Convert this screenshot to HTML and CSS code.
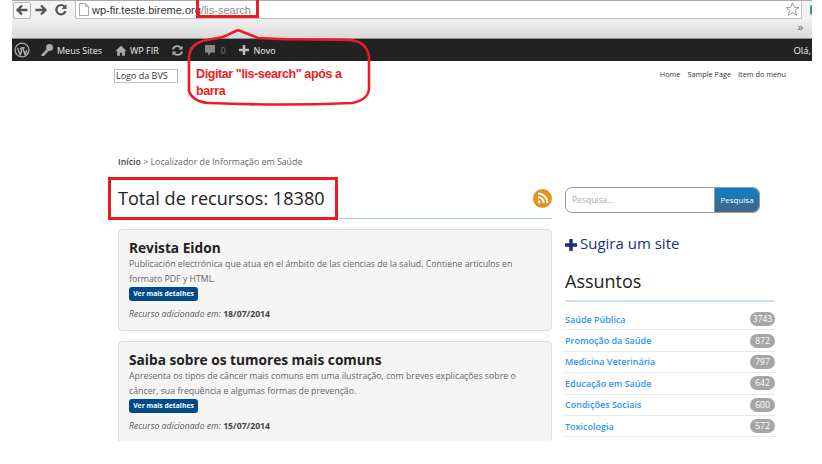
FILE: index.html
```html
<!DOCTYPE html>
<html lang="pt">
<head>
<meta charset="utf-8">
<title>Localizador de Informação em Saúde</title>
<link rel="stylesheet" href="styles.css">
</head>
<body>
<div class="window">
  <div class="chrome">
    <div class="toolbar">
      <span class="navbtn back"><svg width="14" height="14" viewBox="0 0 14 14"><path d="M12.500 7H3M7 2.500 2.500 7 7 11.500" fill="none" stroke="#555" stroke-width="2.400"/></svg></span>
      <span class="navbtn fwd"><svg width="14" height="14" viewBox="0 0 14 14"><path d="M1.500 7H11M7 2.500 11.500 7 7 11.500" fill="none" stroke="#555" stroke-width="2.400"/></svg></span>
      <span class="navbtn reload"><svg width="14" height="14" viewBox="0 0 14 14"><path d="M11.500 8.200A4.700 4.700 0 1 1 10.400 3.400" fill="none" stroke="#555" stroke-width="2.200"/><path d="M12.500 1v5h-5z" fill="#555"/></svg></span>
      <div class="omnibox">
        <svg class="pageicon" width="10" height="13" viewBox="0 0 10 13"><path d="M.5.5h6l3 3v9H.5zM6.500.5v3h3" fill="#fff" stroke="#aaa"/></svg>
        <span class="url">wp-fir.teste.bireme.org<span class="urlpath">/lis-search</span></span>
        <svg class="star" width="15" height="15" viewBox="0 0 15 15"><path d="M7.500 1l1.900 4.400h4.600l-3.600 3 1.300 4.800-4.200-2.600-4.200 2.600 1.300-4.800L1 5.400h4.600z" fill="#fff" stroke="#999"/></svg>
      </div>
      <span class="ext"></span>
    </div>
    <div class="bookmarks">»</div>
  </div>
  <div class="adminbar">
    <div class="admin-left">
      <svg class="wp" width="16" height="16" viewBox="0 0 18 18"><circle cx="9" cy="9" r="7.800" fill="none" stroke="#aaa" stroke-width="1.500"/><path d="M3.800 6.500 7 14.500l1.600-4.500-1.200-3.500M8 6.500h4M9.800 6.500l2.800 8 1.700-5.200" fill="none" stroke="#aaa" stroke-width="1.700"/></svg>
      <span class="item item-sites"><svg width="14" height="14" viewBox="0 0 14 14"><circle cx="9.500" cy="4.500" r="3.500" fill="#aaa"/><path d="M7 6 1.500 11.500V13h2.500l5-5.500z" fill="#aaa"/></svg>Meus Sites</span>
      <span class="item item-home"><svg width="12" height="13" viewBox="0 0 14 14"><path d="M7 1.500 .5 7.500h2V13h3.200V9.500h2.600V13h3.200V7.500h2z" fill="#aaa"/></svg>WP FIR</span>
      <span class="item item-sync"><svg width="13" height="13" viewBox="0 0 14 14"><path d="M2 6a5 5 0 0 1 9-1.500M12 8a5 5 0 0 1-9 1.500" fill="none" stroke="#aaa" stroke-width="2"/><path d="M12.500 1.500v4.500H8zM1.500 12.500V8H6z" fill="#aaa"/></svg><span class="faint">1</span></span>
      <span class="item item-comment"><svg width="10" height="12" viewBox="0 0 10 12"><path d="M0 1h10v7.500H6L3 11.500V8.500H0z" fill="#888"/></svg><span class="dim">0</span></span>
      <span class="item item-new"><svg width="10" height="10" viewBox="0 0 10 10"><path d="M3.700 0h2.600v3.700H10v2.600H6.300V10H3.700V6.300H0V3.700h3.700z" fill="#bbb"/></svg>Novo</span>
    </div>
    <span class="hello">Olá,</span>
  </div>
  <header class="sitehead">
    <span class="logo">Logo da BVS</span>
    <nav class="sitenav"><a>Home</a><a>Sample Page</a><a>Item do menu</a></nav>
  </header>
  <main class="layout">
    <section class="content">
      <p class="crumb"><b>Início</b> &gt; Localizador de Informação em Saúde</p>
      <div class="pagehead">
        <h1>Total de recursos: 18380</h1>
        <span class="rss"><svg width="12" height="12" viewBox="0 0 12 12"><circle cx="2.200" cy="9.800" r="1.600" fill="#fff"/><path d="M1 5.200A5.800 5.800 0 0 1 6.800 11M1 1.500A9.500 9.500 0 0 1 10.500 11" fill="none" stroke="#fff" stroke-width="2"/></svg></span>
      </div>
      <article class="card">
        <h2>Revista Eidon</h2>
        <p class="desc">Publicación electrónica que atua en el ámbito de las ciencias de la salud, Contiene artículos en formato PDF y HTML.</p>
        <a class="more">Ver mais detalhes</a>
        <p class="added"><i>Recurso adicionado em:</i> <b>18/07/2014</b></p>
      </article>
      <article class="card">
        <h2>Saiba sobre os tumores mais comuns</h2>
        <p class="desc">Apresenta os tipos de câncer mais comuns em uma ilustração, com breves explicações sobre o câncer, sua frequência e algumas formas de prevenção.</p>
        <a class="more">Ver mais detalhes</a>
        <p class="added"><i>Recurso adicionado em:</i> <b>15/07/2014</b></p>
      </article>
    </section>
    <aside class="side">
      <div class="search"><span class="field">Pesquisa...</span><span class="go">Pesquisa</span></div>
      <a class="suggest"><svg width="12" height="12" viewBox="0 0 12 12"><path d="M4.300 0h3.400v4.300H12v3.400H7.700V12H4.300V7.700H0V4.300h4.300z" fill="#1f2f7a"/></svg>Sugira um site</a>
      <h3>Assuntos</h3>
      <ul class="topics">
        <li><a>Saúde Pública</a><span class="count">3743</span></li>
        <li><a>Promoção da Saúde</a><span class="count">872</span></li>
        <li><a>Medicina Veterinária</a><span class="count">797</span></li>
        <li><a>Educação em Saúde</a><span class="count">642</span></li>
        <li><a>Condições Sociais</a><span class="count">600</span></li>
        <li><a>Toxicologia</a><span class="count">572</span></li>
      </ul>
    </aside>
  </main>
</div>
<div class="mark mark-url"></div>
<div class="mark mark-total"></div>
<svg class="callout" width="190" height="78" viewBox="0 0 190 78"><path d="M2 28Q3 14 20 11C28 9 32 9 36 8L51 1 71 9C100 11 130 10 162 11Q180 12 182 28V60Q181 71 165 74C120 76 70 76 22 74Q6 73 2 62z" fill="none" stroke="#ed1c24" stroke-width="2.600"/></svg>
<p class="callout-text">Digitar "lis-search" após a barra</p>
</body>
</html>
```
FILE: styles.css
```css
html, body { margin: 0; padding: 0; background: #fff; }
body { height: 464px; overflow: hidden; font-family: "Open Sans", sans-serif; position: relative; }
h1, h2, h3, p, ul { margin: 0; padding: 0; }
.window { width: 800px; margin-left: 12px; height: 464px; overflow: hidden; }

.chrome { height: 38px; background: linear-gradient(#f4f4f4, #f0f0f0 50%, #dadada); border-bottom: 1px solid #8f8f8f; position: relative; }
.toolbar { display: flex; align-items: center; height: 19px; border-top: 1px solid #aaa; box-sizing: border-box; }
.navbtn { width: 18px; height: 17px; display: flex; align-items: center; justify-content: center; box-sizing: border-box; }
.navbtn.back { border: 1px solid #b5b5b5; border-radius: 2px; background: #f8f8f8; margin-left: 1px; }
.navbtn.fwd { margin-left: 1px; }
.navbtn.reload { margin-left: 2px; }
.omnibox { flex: 1; height: 18px; margin-left: 5px; margin-right: 8px; background: #fff; border: 1px solid #bdbdbd; border-top: 0; box-sizing: border-box; border-radius: 0 0 2px 2px; display: flex; align-items: center; padding-left: 3px; }
.url { margin-left: 3px; font: 11px "Liberation Sans", sans-serif; color: #333; }
.urlpath { color: #888; }
.star { margin-left: auto; margin-right: 1px; }
.ext { width: 2px; height: 10px; background: #2a9d6a; border-radius: 2px 0 0 2px; }
.bookmarks { position: absolute; right: 9px; top: 20px; font: 10px/16px "Liberation Sans", sans-serif; color: #555; }

.adminbar { height: 22px; background: #222; display: flex; justify-content: space-between; align-items: center; color: #eee; font-size: 9px; }
.admin-left { display: flex; align-items: center; }
.wp { margin-left: 2px; margin-right: 10px; }
.item { display: flex; align-items: center; gap: 3px; margin-right: 12px; }
.item-sites { margin-right: 13px; }
.item-sync { gap: 4px; }
.item-comment { gap: 6px; margin-right: 13px; }
.item-new { gap: 5px; }
.faint { color: #444; font-size: 8.500px; }
.dim { color: #777; font-size: 8.500px; }
.hello { font-size: 9.500px; white-space: nowrap; padding-right: 1px; }

.sitehead { height: 91px; display: flex; justify-content: space-between; align-items: flex-start; padding: 8px 26px 0 102px; box-sizing: border-box; }
.logo { border: 1px solid #bbb; font-size: 9px; line-height: 12px; width: 64px; box-sizing: border-box; color: #333; padding-left: 1px; }
.sitenav { display: flex; gap: 7px; font-size: 7.300px; color: #333; line-height: 10px; }

.layout { display: flex; height: 289px; overflow: hidden; padding-left: 106px; }
.content { width: 434px; }
.crumb { font-size: 8.800px; line-height: 21px; color: #666; }
.crumb b { color: #444; font-weight: 600; }
.pagehead { height: 40px; padding-top: 3px; margin-top: 2px; margin-bottom: 10px; display: flex; justify-content: space-between; align-items: center; border-bottom: 1px solid #a9c6d6; }
h1 { font-size: 18.100px; font-weight: 400; color: #222; }
.rss { width: 19px; height: 19px; border-radius: 50%; background: #e8921e; display: flex; align-items: center; justify-content: center; }
.card { height: 102px; border: 1px solid #ddd; border-radius: 4px; background: #f5f5f5; padding: 9px 10px 0; box-sizing: border-box; margin-bottom: 10px; }
h2 { font-size: 13.700px; line-height: 18px; font-weight: 700; color: #222; }
.desc { font-size: 8.770px; line-height: 15px; color: #666; }
.more { display: block; width: 69px; height: 14px; border-radius: 3px; background: #034a8c; color: #fff; font-size: 6.800px; font-weight: 700; line-height: 14px; text-align: center; }
.added { font-size: 8.700px; line-height: 12px; margin-top: 7px; color: #555; }
.added b { font-weight: 700; color: #444; }

.side { width: 210px; margin-left: 13px; padding-top: 35px; }
.search { width: 195px; height: 26px; display: flex; border: 1px solid #999; border-radius: 7px; box-sizing: border-box; overflow: hidden; }
.field { flex: 1; font-size: 8.500px; line-height: 24px; color: #aaa; padding-left: 6px; border-right: 1px solid #999; }
.go { width: 44px; background: linear-gradient(#0a80cc, #466683); color: #fff; font-size: 8px; line-height: 24px; text-align: center; }
.suggest { display: flex; align-items: center; gap: 3px; margin-top: 19px; font-size: 15px; line-height: 22px; color: #1f2f7a; }
.suggest svg { margin-top: 3px; }
h3 { font-size: 18px; font-weight: 400; line-height: 26px; color: #222; margin-top: 14px; padding-bottom: 6px; border-bottom: 2px solid #cfdfe8; }
.topics { list-style: none; padding-top: 7px; }
.topics li { display: flex; justify-content: space-between; align-items: center; height: 21.400px; border-bottom: 1px solid #e8e8e8; font-size: 9px; font-weight: 600; color: #2b95f0; box-sizing: border-box; }
.count { width: 25px; height: 14px; border-radius: 7px; background: #a6a6a6; color: #fff; font-size: 8.500px; font-weight: 400; line-height: 14px; text-align: center; }

.mark { position: absolute; border: 3px solid #ed1c24; box-sizing: border-box; }
.mark-url { left: 196px; top: -3px; width: 63px; height: 21px; }
.mark-total { left: 108px; top: 177px; width: 230px; height: 43px; }
.callout { position: absolute; left: 187px; top: 29px; }
.callout-text { position: absolute; left: 196px; top: 66px; width: 160px; font: 700 12.500px/17px "Liberation Sans", sans-serif; letter-spacing: -.4px; color: #ed1c24; }
```
